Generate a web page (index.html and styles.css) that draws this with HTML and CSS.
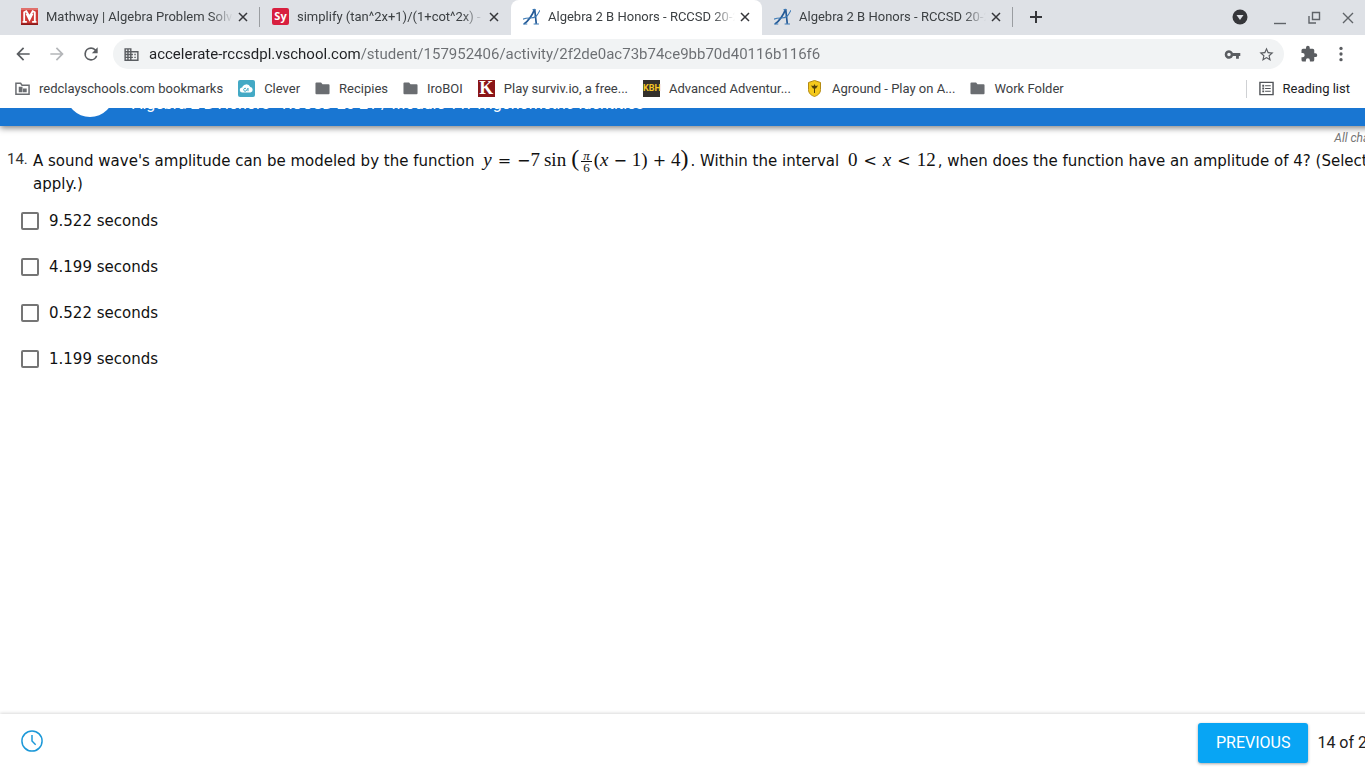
FILE: index.html
```
<!DOCTYPE html>
<html lang="en">
<head>
    <meta charset="UTF-8">
    <meta name="viewport" content="width=device-width, initial-scale=1.0">
    <title>Algebra 2 B Honors - RCCSD 20-21</title>
    <link rel="stylesheet" href="styles.css">
</head>
<body>
    <!-- Tab strip -->
    <div class="tabs">
        <div class="tab">
            <svg class="favicon" viewBox="0 0 16 16"><rect width="16" height="16" fill="#cf3a36"/><path d="M0 0h16v2H0z" fill="#e0706c"/><path d="M3 13V4l2-1 3 5 3-5 2 1v9M1.500 13h4M10.500 13h4M5 5l3 6 3-6" fill="none" stroke="#fff" stroke-width="1.700"/><path d="M0 15.200h16" stroke="#8d1b1b" stroke-width="1.600"/></svg>
            <span class="tab-title">Mathway | Algebra Problem Solver</span>
            <button class="close" aria-label="Close tab"><svg viewBox="0 0 10 10"><path d="M1 1l8 8M9 1l-8 8"/></svg></button>
        </div>
        <div class="tab">
            <span class="favicon sy">Sy</span>
            <span class="tab-title">simplify (tan^2x+1)/(1+cot^2x) - Symbolab</span>
            <button class="close" aria-label="Close tab"><svg viewBox="0 0 10 10"><path d="M1 1l8 8M9 1l-8 8"/></svg></button>
        </div>
        <div class="tab active">
            <svg class="favicon" viewBox="0 0 16 16"><path d="M1 15C5 12 9 6 11 1L12.500 15" fill="none" stroke="#245a96" stroke-width="1.600"/><path d="M0 15h4M10 15h5M9 1.500h2.500M0 10.500c5-2 9 0 12-2.500 2-1.600 3-4 4-6" fill="none" stroke="#3d7ab5"/></svg>
            <span class="tab-title">Algebra 2 B Honors - RCCSD 20-21</span>
            <button class="close" aria-label="Close tab"><svg viewBox="0 0 10 10"><path d="M1 1l8 8M9 1l-8 8"/></svg></button>
        </div>
        <div class="tab">
            <svg class="favicon" viewBox="0 0 16 16"><path d="M1 15C5 12 9 6 11 1L12.500 15" fill="none" stroke="#245a96" stroke-width="1.600"/><path d="M0 15h4M10 15h5M9 1.500h2.500M0 10.500c5-2 9 0 12-2.500 2-1.600 3-4 4-6" fill="none" stroke="#3d7ab5"/></svg>
            <span class="tab-title">Algebra 2 B Honors - RCCSD 20-21</span>
            <button class="close" aria-label="Close tab"><svg viewBox="0 0 10 10"><path d="M1 1l8 8M9 1l-8 8"/></svg></button>
        </div>
        <button class="new-tab" aria-label="New tab"><svg viewBox="0 0 14 14"><path d="M7 1v12M1 7h12"/></svg></button>
        <div class="window-buttons">
            <button class="search-tabs" aria-label="Search tabs"><svg viewBox="0 0 16 16"><circle cx="8" cy="8" r="7.500" fill="#35363a"/><path d="M4.500 6h7L8 11z" fill="#dee1e6"/></svg></button>
            <button aria-label="Minimize"><svg viewBox="0 0 16 16"><path d="M2 14.500h12" class="line"/></svg></button>
            <button aria-label="Restore"><svg viewBox="0 0 16 16"><path d="M6.500 3.500h7v7h-7zM3 7v7h7" class="line"/></svg></button>
            <button aria-label="Close"><svg viewBox="0 0 16 16"><path d="M3 4l10 10M13 4L3 14" class="line"/></svg></button>
        </div>
    </div>

    <!-- Toolbar -->
    <div class="toolbar">
        <button aria-label="Back"><svg viewBox="0 0 24 24"><path d="M20 11H7.830l5.590-5.590L12 4l-8 8 8 8 1.410-1.410L7.830 13H20v-2z"/></svg></button>
        <button class="disabled" aria-label="Forward"><svg viewBox="0 0 24 24"><path d="M12 4l-1.410 1.410L16.170 11H4v2h12.170l-5.580 5.590L12 20l8-8z"/></svg></button>
        <button aria-label="Reload"><svg viewBox="0 0 24 24"><path d="M17.650 6.350A7.960 7.960 0 0 0 12 4a8 8 0 1 0 7.730 10h-2.080A6 6 0 1 1 12 6c1.660 0 3.140.690 4.220 1.780L13 11h7V4l-2.350 2.350z"/></svg></button>
        <div class="address">
            <svg viewBox="0 0 24 24"><path d="M12 7V3H2v18h20V7H12zM6 19H4v-2h2v2zm0-4H4v-2h2v2zm0-4H4V9h2v2zm0-4H4V5h2v2zm4 12H8v-2h2v2zm0-4H8v-2h2v2zm0-4H8V9h2v2zm0-4H8V5h2v2zm10 12h-8v-2h2v-2h-2v-2h2v-2h-2V9h8v10zm-2-8h-2v2h2v-2zm0 4h-2v2h2v-2z"/></svg>
            <input type="text" aria-label="Address" value="accelerate-rccsdpl.vschool.com/student/157952406/activity/2f2de0ac73b74ce9bb70d40116b116f6">
            <button aria-label="Saved passwords"><svg viewBox="0 0 24 24"><path d="M12.650 10A6 6 0 1 0 12.650 14H17v4h4v-4h2v-4H12.650zM7 14.500a2.500 2.500 0 1 1 0-5 2.500 2.500 0 0 1 0 5z"/></svg></button>
            <button class="star" aria-label="Bookmark"><svg viewBox="0 0 24 24"><path d="M22 9.240l-7.190-.620L12 2 9.190 8.630 2 9.240l5.460 4.730L5.820 21 12 17.270 18.180 21l-1.630-7.030L22 9.240zM12 15.400l-3.760 2.270 1-4.280-3.320-2.880 4.380-.380L12 6.100l1.710 4.040 4.380.380-3.320 2.880 1 4.280L12 15.400z"/></svg></button>
        </div>
        <button aria-label="Extensions"><svg viewBox="0 0 24 24"><path d="M20.500 11H19V7a2 2 0 0 0-2-2h-4V3.500a2.500 2.500 0 0 0-5 0V5H4a2 2 0 0 0-2 2v3.800h1.500a2.700 2.700 0 0 1 0 5.400H2V20a2 2 0 0 0 2 2h3.800v-1.500a2.700 2.700 0 0 1 5.400 0V22H17a2 2 0 0 0 2-2v-4h1.500a2.500 2.500 0 0 0 0-5z"/></svg></button>
        <button aria-label="Menu"><svg viewBox="0 0 24 24"><circle cx="12" cy="4.500" r="2.200"/><circle cx="12" cy="12" r="2.200"/><circle cx="12" cy="19.500" r="2.200"/></svg></button>
    </div>

    <!-- Bookmarks bar -->
    <div class="bookmarks">
        <a href="#"><svg class="folder" viewBox="0 0 16 16"><path d="M1 2.500h5l1.500 2H15v9.500H1z" fill="none" stroke="#6a6d71" stroke-width="1.600"/><path d="M4 6h4v6H4zM8.500 8h4v4h-4z"/></svg>redclayschools.com bookmarks</a>
        <a href="#"><svg class="site" viewBox="0 0 17 17"><rect width="17" height="17" rx="2" fill="#43a9c5"/><path d="M4.500 12.500a2.500 2.500 0 0 1-.3-5A4.300 4.300 0 0 1 12.300 7a2.800 2.800 0 0 1 .2 5.500z" fill="#fff"/><path d="M8 8.500a1.500 1.500 0 1 0 0 2.500l2-2.800v3" fill="none" stroke="#43a9c5"/></svg>Clever</a>
        <a href="#"><svg class="folder" viewBox="0 0 16 16"><path d="M1.500 1.500h5l1.500 2h6.500a1 1 0 0 1 1 1V13a1 1 0 0 1-1 1h-13a1 1 0 0 1-1-1V2.500a1 1 0 0 1 1-1z"/></svg>Recipies</a>
        <a href="#"><svg class="folder" viewBox="0 0 16 16"><path d="M1.500 1.500h5l1.500 2h6.500a1 1 0 0 1 1 1V13a1 1 0 0 1-1 1h-13a1 1 0 0 1-1-1V2.500a1 1 0 0 1 1-1z"/></svg>IroBOI</a>
        <a href="#"><span class="site kong">K</span>Play surviv.io, a free...</a>
        <a href="#"><span class="site kbh">KBH</span>Advanced Adventur...</a>
        <a href="#"><svg class="site" viewBox="0 0 17 17"><path d="M8.500.500l6 2v7c0 4-3 6-6 7-3-1-6-3-6-7v-7z" fill="#f4c91c" stroke="#b48a13"/><path d="M5 5.500l2.500.5 1-2 1 2 2.500-.5-2 3h-1v4.500h-1V8.500H7z" fill="#51400b"/></svg>Aground - Play on A...</a>
        <a href="#"><svg class="folder" viewBox="0 0 16 16"><path d="M1.500 1.500h5l1.500 2h6.500a1 1 0 0 1 1 1V13a1 1 0 0 1-1 1h-13a1 1 0 0 1-1-1V2.500a1 1 0 0 1 1-1z"/></svg>Work Folder</a>
        <button class="reading"><svg viewBox="0 0 16 16"><path d="M1 1.500h14v13H1z" fill="none" stroke="#505357" stroke-width="1.500"/><path d="M3.500 4h2v2h-2zM3.500 7h2v2h-2zM3.500 10h2v2h-2zM6.500 4.500h6v1h-6zM6.500 7.500h6v1h-6zM6.500 10.500h6v1h-6z"/></svg>Reading list</button>
    </div>

    <!-- Page -->
    <div class="page">
        <header class="course">
            <div class="avatar"></div>
            <div class="course-title">Algebra 2 B Honors - RCCSD 20-21 / Module 11: Trigonometric Identities</div>
        </header>

        <main>
            <div class="saved">All changes saved</div>
            <div class="question">
                <span class="number">14.</span>
                <p>A sound wave's amplitude can be modeled by the function
                    <span class="math"><i>y</i><span class="rel">=</span><span class="sign">−</span>7<span class="fn">sin</span><span class="big">(</span><span class="frac"><i>π</i><span>6</span></span><span class="paren">(</span><i>x</i><span class="op">−</span>1<span class="paren">)</span><span class="op">+</span>4<span class="big">)</span></span>.
                    Within the interval
                    <span class="math">0<span class="rel">&lt;</span><i>x</i><span class="rel">&lt;</span>12</span>,
                    when does the function have an amplitude of 4? (Select all that apply.)</p>
            </div>
            <div class="answers">
                <label><input type="checkbox">9.522 seconds</label>
                <label><input type="checkbox">4.199 seconds</label>
                <label><input type="checkbox">0.522 seconds</label>
                <label><input type="checkbox">1.199 seconds</label>
            </div>
        </main>

        <footer>
            <button class="clock" aria-label="Time spent"><svg viewBox="0 0 24 24"><circle cx="12" cy="12" r="11"/><path d="M12 5.500V12l4 4"/></svg></button>
            <button class="previous">PREVIOUS</button>
            <span class="count">14 of 20</span>
        </footer>
    </div>
</body>
</html>
```
FILE: styles.css
```
* { box-sizing: border-box; }
body {
    margin: 0; height: 100vh; overflow: hidden;
    display: flex; flex-direction: column;
    background: #fff; color: #3c4043;
    font-family: Roboto, sans-serif; font-size: 13px;
}
button {
    border: none; background: none; padding: 0; margin: 0;
    font: inherit; color: inherit; cursor: pointer;
    display: flex; align-items: center; justify-content: center;
}
svg { display: block; flex: none; }

/* Tabs */
.tabs {
    display: flex; flex: none; height: 35px;
    padding-left: 9px; background: #dee1e6;
}
.tab {
    flex: 0 1 251px; min-width: 0; height: 35px;
    display: flex; align-items: center;
    padding: 0 11px 2px 12px;
    background: linear-gradient(#9a9da1, #9a9da1) right 7px / 1px 20px no-repeat;
}
.tab:nth-child(2), .tab.active { background-image: none; }
.tab.active { background-color: #fff; border-radius: 8px 8px 0 0; }
.favicon { width: 17px; height: 17px; flex: none; }
.sy {
    background: #d81f3f; color: #fff; border-radius: 2px;
    font: bold 11px/16px "Open Sans", sans-serif; text-align: center;
}
.tab-title {
    flex: 1; min-width: 0; margin: 0 4px 0 8px;
    white-space: nowrap; overflow: hidden;
    -webkit-mask-image: linear-gradient(to left, transparent, #000 22px);
    mask-image: linear-gradient(to left, transparent, #000 22px);
}
.close { width: 12px; height: 16px; }
.close svg { width: 10px; height: 10px; stroke: #35363a; stroke-width: 1.5; }
.new-tab { width: 46px; padding-bottom: 2px; }
.new-tab svg { width: 14px; height: 14px; stroke: #35363a; stroke-width: 2; }
.window-buttons { display: flex; gap: 18px; margin-left: auto; padding: 0 9px 2px 0; }
.window-buttons svg { width: 16px; height: 16px; }
.search-tabs { margin-right: 6px; }
.line { fill: none; stroke: #5f6368; stroke-width: 1.4; }

/* Toolbar */
.toolbar {
    display: flex; align-items: center; flex: none;
    height: 38px; padding: 0 15px 0 13px; gap: 14px;
}
.toolbar svg { width: 18px; height: 18px; fill: #5a5d61; }
.toolbar > button:nth-child(-n+3) svg { width: 20px; height: 20px; }
.toolbar .disabled svg { fill: #b4b6b9; }
.address {
    flex: 1; height: 30px; display: flex; align-items: center;
    margin: 0 2px 0 -2px; padding: 0 9px 0 10px; border-radius: 15px; background: #f1f3f4;
}
.address svg { width: 17px; height: 17px; }
.address input {
    flex: 1; min-width: 0; height: 24px; padding: 0 0 0 9px;
    border: none; outline: none;
    font: 15px/24px Roboto, sans-serif; color: transparent;
    background: linear-gradient(90deg, #202124 220px, #6b6e72 220px);
    -webkit-background-clip: text; background-clip: text;
}
.star { margin-left: 17px; }

/* Bookmarks */
.bookmarks {
    display: flex; align-items: center; flex: none;
    height: 35px; padding: 0 15px 4px; gap: 15px;
    white-space: nowrap;
}
.bookmarks a { display: flex; align-items: center; gap: 9px; color: inherit; text-decoration: none; }
.folder { width: 15px; height: 15px; fill: #6a6d71; }
.site { width: 17px; height: 17px; flex: none; }
.kong { background: #8a1518; color: #fff; font: bold 18px/17px "Liberation Serif", serif; text-align: center; }
.kbh { background: #33302b; color: #f5c524; font: bold 9px/17px Roboto, sans-serif; text-align: center; }
.reading {
    margin-left: auto; height: 18px; gap: 9px; padding-left: 12px;
    border-left: 1px solid #cfd1d4; color: #202124;
}
.reading svg { width: 15px; height: 15px; fill: #505357; }

/* The page is wider than the window, its right side is cut off */
.page {
    flex: 1; min-height: 0; width: calc(100% + 105px);
    display: flex; flex-direction: column;
}
.course {
    display: flex; align-items: flex-end; flex: none;
    height: 18px; padding: 0 66px 9px; gap: 18px;
    background: #1976d2; box-shadow: 0 2px 6px rgba(0,0,0,0.5);
    clip-path: inset(0 0 -12px 0);
}
.avatar { width: 48px; height: 48px; border-radius: 50%; background: #fff; flex: none; }
.course-title { font-size: 16px; line-height: 20px; padding-bottom: 3px; color: #fff; white-space: nowrap; }

main { flex: 1; min-height: 0; padding: 4px 0 0 7px; color: #111; font: 15px/22px "DejaVu Sans", sans-serif; }
.saved {
    padding-right: 42px; text-align: right; color: #757575;
    font: italic 12px/16px Roboto, sans-serif;
}
.question { display: flex; margin-top: 2px; padding-right: 20px; }
.number { width: 26px; flex: none; font-family: Roboto, sans-serif; color: #333; }
.question p { margin: 0; }
.math { font: 19px/20px "Liberation Serif", serif; white-space: nowrap; margin: 0 2px 0 4px; }
.rel, .op, .sign { font: 16px/20px "DejaVu Sans", sans-serif; }
.rel { margin: 0 6px; }
.op { margin: 0 5px; }
.fn { margin: 0 5px 0 4px; }
.big { font-size: 24px; line-height: 20px; }
.frac {
    display: inline-flex; flex-direction: column; align-items: center;
    vertical-align: middle; font-size: 13px; line-height: 10px; margin: 0 2px;
}
.frac span { border-top: 1px solid #111; padding: 1px 2px 0; }

.answers { display: flex; flex-direction: column; gap: 24px; padding: 15px 0 0 14px; }
.answers label { display: flex; align-items: center; gap: 10px; }
.answers input {
    appearance: none; width: 18px; height: 18px; margin: 0;
    border: 2px solid #757575; border-radius: 2px; background: #fff;
}

/* Footer */
footer {
    display: flex; align-items: center; flex: none;
    height: 54px; padding: 3px 94px 0 21px;
    box-shadow: 0 -1px 3px rgba(0,0,0,0.15);
}
.clock { padding-bottom: 4px; }
.clock svg { width: 22px; height: 22px; fill: none; stroke: #1b98d8; stroke-width: 1.6; }
.previous {
    margin-left: auto; height: 40px; padding: 0 18px; border-radius: 3px;
    background: #08a5f4; color: #fff; font-size: 16px;
    box-shadow: 0 1px 3px rgba(0,0,0,0.35);
}
.count { margin-left: 9px; font-size: 16px; color: #212121; }
```
